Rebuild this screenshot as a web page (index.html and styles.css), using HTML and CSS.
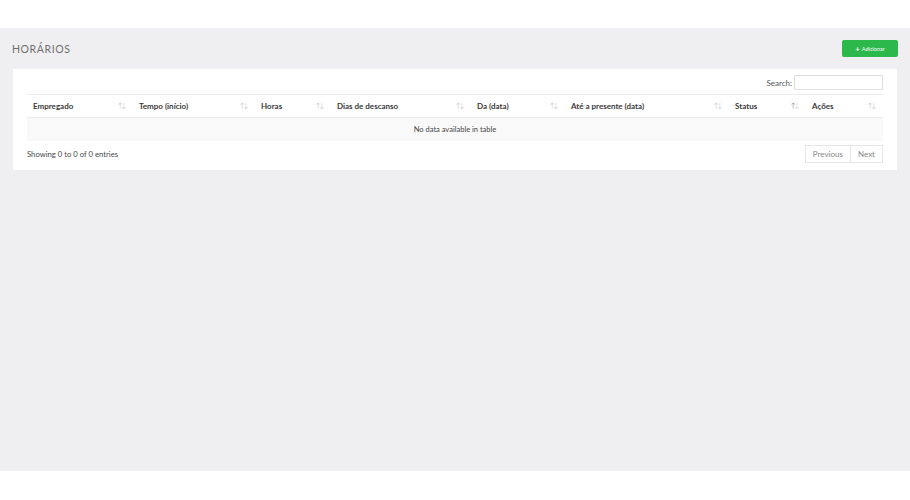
FILE: index.html
```html
<!DOCTYPE html>
<html lang="pt">
<head>
<meta charset="utf-8">
<title>Horários</title>
<link rel="stylesheet" href="styles.css">
</head>
<body>
<div class="topbar"></div>
<main class="content">
  <div class="page-head">
    <h1 class="title">HORÁRIOS</h1>
    <button class="btn-add"><span class="plus">+</span> Adicionar</button>
  </div>
  <section class="card">
    <div class="filter">
      <label class="search-label">Search:</label>
      <input class="search-input" type="text">
    </div>
    <table class="dt">
      <colgroup>
        <col class="c1"><col class="c2"><col class="c3"><col class="c4"><col class="c5"><col class="c6"><col class="c7"><col class="c8">
      </colgroup>
      <thead>
        <tr>
          <th><span>Empregado</span><i class="sort">↑↓</i></th>
          <th><span>Tempo (início)</span><i class="sort">↑↓</i></th>
          <th><span>Horas</span><i class="sort">↑↓</i></th>
          <th><span>Dias de descanso</span><i class="sort">↑↓</i></th>
          <th><span>Da (data)</span><i class="sort">↑↓</i></th>
          <th><span>Até a presente (data)</span><i class="sort">↑↓</i></th>
          <th><span>Status</span><i class="sort asc">↑<b>↓</b></i></th>
          <th><span>Ações</span><i class="sort">↑↓</i></th>
        </tr>
      </thead>
      <tbody>
        <tr class="odd"><td colspan="8" class="empty">No data available in table</td></tr>
      </tbody>
    </table>
    <div class="foot">
      <div class="info">Showing 0 to 0 of 0 entries</div>
      <div class="pager">
        <span class="pg">Previous</span><span class="pg">Next</span>
      </div>
    </div>
  </section>
</main>
<div class="bottombar"></div>
</body>
</html>
```

FILE: styles.css
```css
html, body {
  margin: 0;
  padding: 0;
  background: #ffffff;
  font-family: Lato, "Open Sans", "Liberation Sans", sans-serif;
  color: #333;
}
.topbar { height: 28px; background: #fff; }
.content {
  height: 443px;
  background: #efeff1;
  padding: 12px 13px 0 13px;
  box-sizing: border-box;
}
.page-head {
  display: flex;
  align-items: center;
  justify-content: space-between;
  height: 17px;
  margin-bottom: 12px;
}
.title {
  margin: 0 0 0 -1px;
  font-size: 10.5px;
  font-weight: 400;
  letter-spacing: 0.6px;
  color: #6f6f6f;
}
.btn-add {
  width: 56px;
  height: 17px;
  border: none;
  border-radius: 2px;
  background: #2db84c;
  color: #fff;
  font-family: Lato, "Open Sans", sans-serif;
  font-size: 5.5px;
  padding: 0;
  margin-right: -1px;
  display: flex;
  align-items: center;
  justify-content: center;
  gap: 2px;
}
.btn-add .plus { font-size: 8px; font-weight: 700; line-height: 1; }
.card {
  background: #fff;
  padding: 6px 14px 7px 14px;
}
.filter {
  display: flex;
  justify-content: flex-end;
  align-items: center;
  height: 15px;
  margin-bottom: 4px;
  gap: 2px;
}
.search-label { font-size: 8px; color: #555; }
.search-input {
  width: 89px;
  height: 15px;
  box-sizing: border-box;
  border: 1px solid #ddd;
  border-radius: 1px;
  padding: 0;
  margin: 0;
}
.dt {
  width: 100%;
  border-collapse: collapse;
  table-layout: fixed;
}
.c1 { width: 106px; }
.c2 { width: 122px; }
.c3 { width: 76px; }
.c4 { width: 140px; }
.c5 { width: 94px; }
.c6 { width: 164px; }
.c7 { width: 77px; }
.c8 { width: 77px; }
.dt th {
  height: 23px;
  box-sizing: border-box;
  border-top: 1px solid #ececec;
  border-bottom: 1px solid #ececec;
  padding: 0 8px 0 6px;
  text-align: left;
  font-size: 8px;
  font-weight: 700;
  color: #3a3a3a;
}
.dt th span { display: inline-block; }
.sort {
  float: right;
  font-style: normal;
  font-weight: 400;
  font-size: 7px;
  color: #d0d0d0;
  letter-spacing: -1.5px;
}
.sort.asc { color: #999; }
.sort.asc b { font-weight: 400; color: #ddd; }
.dt td {
  height: 23px;
  box-sizing: border-box;
  font-size: 7.5px;
  color: #444;
}
.dt tr.odd td { background: #f9f9f9; }
.empty { text-align: center; }
.foot {
  display: flex;
  justify-content: space-between;
  align-items: center;
  margin-top: 4px;
}
.info { font-size: 7.7px; color: #4a4a4a; }
.pager { display: flex; }
.pg {
  height: 18px;
  box-sizing: border-box;
  border: 1px solid #e6e6e6;
  display: flex;
  align-items: center;
  padding: 0 7px;
  font-size: 8px;
  color: #888;
}
.pg + .pg { border-left: none; }
.bottombar { height: 29px; background: #fff; }
```
